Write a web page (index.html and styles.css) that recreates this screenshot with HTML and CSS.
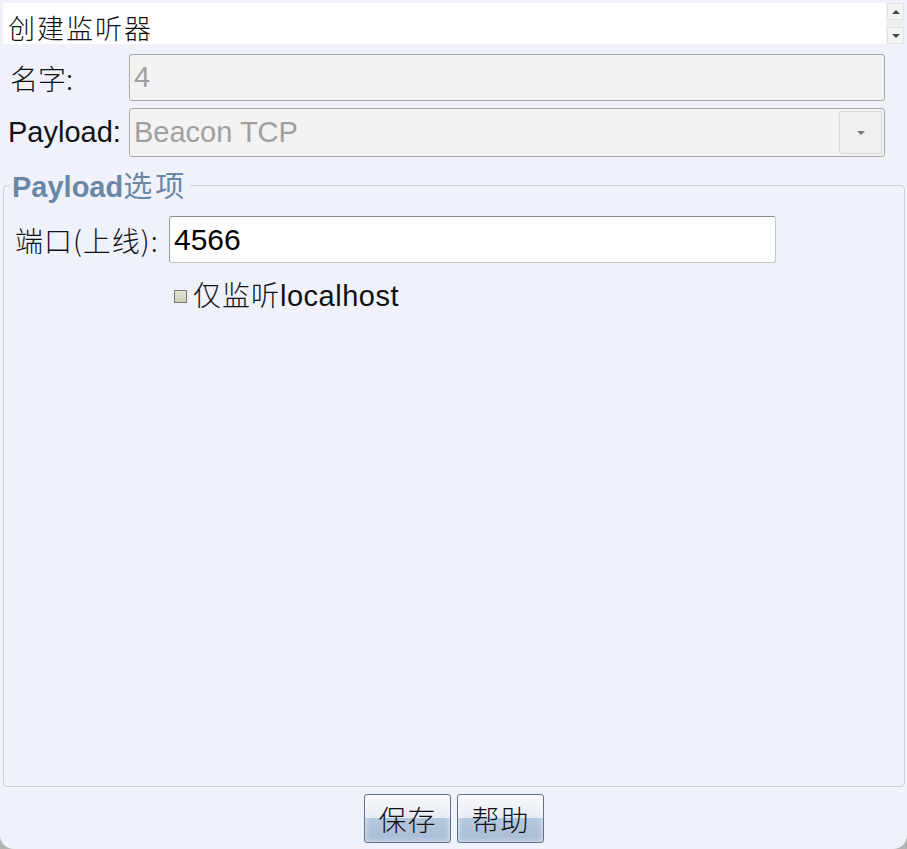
FILE: index.html
```html
<!DOCTYPE html>
<html lang="zh-CN">
<head>
<meta charset="utf-8">
<title>创建监听器</title>
<link rel="stylesheet" href="styles.css">
</head>
<body>
<div class="window">
  <div class="title-area">
    <div class="title-text">创建监听器</div>
    <div class="scroll">
      <div class="scroll-btn"><span class="arrow-up"></span></div>
      <div class="scroll-btn"><span class="arrow-down"></span></div>
    </div>
  </div>

  <div class="form-row row-name">
    <label class="label label-cjk">名字:</label>
    <div class="field field-disabled">4</div>
  </div>

  <div class="form-row row-payload">
    <label class="label">Payload:</label>
    <div class="field field-disabled select">
      <span class="select-value">Beacon TCP</span>
      <div class="drop-btn"><span class="arrow-down small"></span></div>
    </div>
  </div>

  <fieldset class="options">
    <legend class="legend"><b>Payload</b><span class="legend-cjk">选项</span></legend>
    <div class="opt-row">
      <label class="opt-label">端口(上线):</label>
      <div class="field field-active">4566</div>
    </div>
    <div class="check-row">
      <span class="checkbox"></span>
      <span class="check-text">仅监听<span class="latin">localhost</span></span>
    </div>
  </fieldset>

  <div class="buttons">
    <button class="btn">保存</button>
    <button class="btn">帮助</button>
  </div>
</div>
</body>
</html>
```

FILE: styles.css
```css
html {
  background: #b4b4b4;
}
body {
  margin: 0;
  font-family: "Liberation Sans", Arial, "Noto Sans CJK SC", sans-serif;
  color: #111;
}
.window {
  box-sizing: border-box;
  height: 849px;
  background: #eff2fa;
  border-radius: 0 0 14px 14px;
  padding: 3px 2px 0 3px;
  display: flex;
  flex-direction: column;
}
.title-area {
  display: flex;
  height: 41px;
  flex: none;
}
.title-text {
  flex: 1;
  background: #ffffff;
  font-family: "Noto Sans CJK SC", sans-serif;
  font-size: 27px;
  line-height: 32px;
  letter-spacing: 2px;
  padding-left: 5px;
  padding-top: 9px;
  height: 41px;
  box-sizing: border-box;
  color: #111;
  font-weight: 300;
}
.scroll {
  width: 17px;
  margin-left: 1px;
  margin-right: 1px;
  background: #eceef2;
  display: flex;
  flex-direction: column;
  justify-content: space-between;
}
.scroll-btn {
  height: 15px;
  background: #f4f4f4;
  border: 1px solid #e2e2e2;
  display: flex;
  align-items: center;
  justify-content: center;
}
.arrow-up {
  width: 0;
  height: 0;
  border-left: 4px solid transparent;
  border-right: 4px solid transparent;
  border-bottom: 4px solid #444;
}
.arrow-down {
  width: 0;
  height: 0;
  border-left: 4px solid transparent;
  border-right: 4px solid transparent;
  border-top: 4px solid #444;
}
.arrow-down.small {
  border-top-color: #777;
}
.form-row {
  display: flex;
  align-items: center;
  flex: none;
}
.row-name {
  margin-top: 10px;
  height: 47px;
}
.row-payload {
  margin-top: 7px;
  height: 49px;
}
.label {
  width: 126px;
  font-size: 29px;
  padding-left: 5px;
  box-sizing: border-box;
}
.label-cjk {
  font-family: "Noto Sans CJK SC", sans-serif;
  font-weight: 300;
  padding-left: 7px;
  font-size: 28px;
}
.field {
  box-sizing: border-box;
  height: 100%;
  border: 1px solid #a9a9a9;
  border-radius: 3px;
  font-size: 29px;
  display: flex;
  align-items: center;
  padding-left: 4px;
}
.field-disabled {
  width: 756px;
  background: #f3f3f3;
  color: #a0a0a0;
}
.select {
  justify-content: space-between;
  padding-right: 2px;
}
.drop-btn {
  width: 43px;
  height: 43px;
  box-sizing: border-box;
  border: 1px solid #dcdcdc;
  border-radius: 2px;
  background: #f0f0f0;
  display: flex;
  align-items: center;
  justify-content: center;
}
.options {
  flex: 1;
  margin: 12px 0 0 0;
  padding: 0;
  border: 1px solid #c3d1e3;
  border-radius: 4px;
  min-width: 0;
}
.legend {
  margin-left: 6px;
  padding: 0 3px 0 2px;
  color: #6b87a6;
  font-size: 29px;
  font-family: "Noto Sans CJK SC", sans-serif;
  font-weight: 400;
  line-height: 30px;
}
.legend b {
  font-family: "Liberation Sans", Arial, sans-serif;
  font-weight: 700;
}
.legend-cjk {
  letter-spacing: 3px;
}
.opt-row {
  display: flex;
  align-items: center;
  height: 47px;
  margin-top: 14px;
}
.opt-label {
  width: 165px;
  box-sizing: border-box;
  padding-left: 11px;
  font-family: "Noto Sans CJK SC", sans-serif;
  font-weight: 300;
  font-size: 28px;
  letter-spacing: 1px;
  color: #111;
  white-space: nowrap;
}
.field-active {
  width: 607px;
  background: #ffffff;
  border-color: #8a8a8a #c6c6c6 #c6c6c6 #9a9a9a;
  color: #000;
  font-size: 30px;
}
.check-row {
  display: flex;
  align-items: center;
  margin-top: 11px;
  padding-left: 170px;
}
.checkbox {
  width: 13px;
  height: 13px;
  box-sizing: border-box;
  border: 1px solid #6f7a6f;
  background: linear-gradient(#e3e5d7, #c9cdb8);
  margin-right: 6px;
  margin-top: 4px;
}
.check-text {
  font-family: "Noto Sans CJK SC", sans-serif;
  font-weight: 300;
  font-size: 28px;
  letter-spacing: 1px;
  color: #111;
}
.latin {
  font-family: "Liberation Sans", Arial, sans-serif;
  font-weight: 400;
  font-size: 29px;
  letter-spacing: 0.5px;
}
.buttons {
  flex: none;
  display: flex;
  justify-content: center;
  gap: 6px;
  margin-top: 7px;
  margin-bottom: 6px;
  padding-right: 0;
}
.btn {
  width: 87px;
  height: 49px;
  border: 1px solid #5e738f;
  border-radius: 3px;
  background: linear-gradient(#f8f9fc 0%, #e6ebf3 48%, #b6c8de 50%, #a7bbd5 100%);
  box-shadow: inset 0 0 6px rgba(255, 255, 255, 0.7);
  font-family: "Noto Sans CJK SC", sans-serif;
  font-weight: 300;
  font-size: 28px;
  color: #111;
  padding: 0;
  letter-spacing: 1px;
}
```
